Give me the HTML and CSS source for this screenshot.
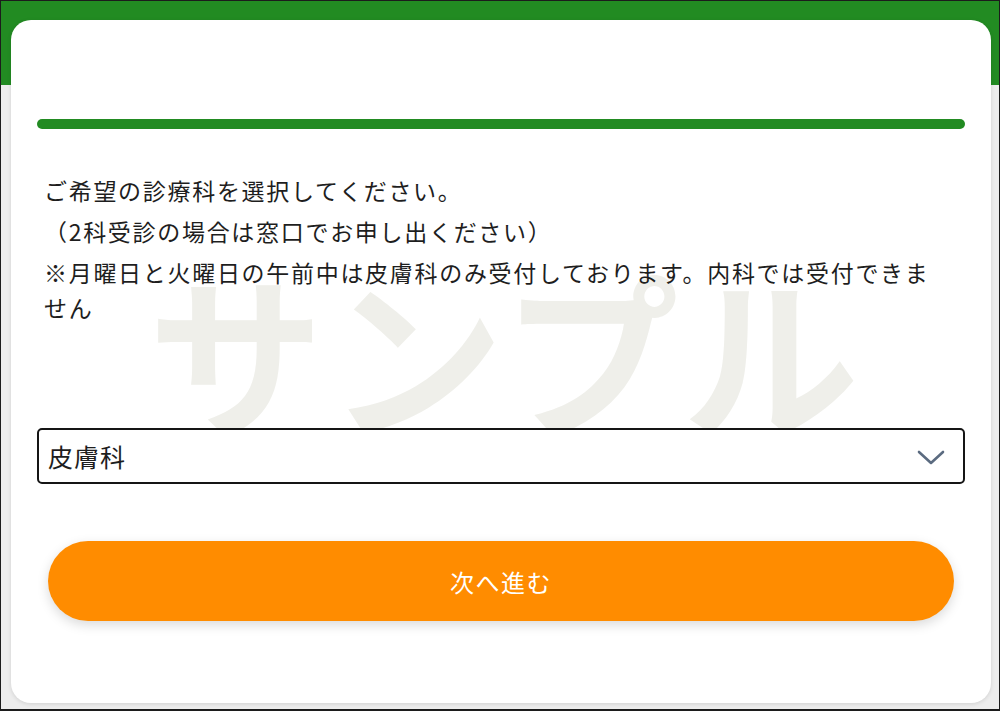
FILE: index.html
```html
<!DOCTYPE html>
<html lang="ja">
<head>
<meta charset="utf-8">
<link rel="stylesheet" href="styles.css">
</head>
<body>
<div class="frame">
  <div class="card">
    <div class="progress"></div>
    <div class="watermark">サンプル</div>
    <div class="message">
      <p class="line">ご希望の診療科を選択してください。</p>
      <p class="line">（2科受診の場合は窓口でお申し出ください）</p>
      <p class="line">※月曜日と火曜日の午前中は皮膚科のみ受付しております。内科では受付できません</p>
    </div>
    <div class="select">
      <span class="select-value">皮膚科</span>
      <svg class="chevron" width="28" height="16" viewBox="0 0 28 16"><path d="M2 2 L14 13 L26 2" fill="none" stroke="#5b6b80" stroke-width="2.6" stroke-linecap="round" stroke-linejoin="round"/></svg>
    </div>
    <div class="button-row">
      <button class="next">次へ進む</button>
    </div>
  </div>
</div>
</body>
</html>
```

FILE: styles.css
```css
* { box-sizing: border-box; }
html, body { margin: 0; padding: 0; }
body {
  width: 1000px;
  height: 711px;
  overflow: hidden;
  font-family: "Noto Sans CJK JP", "Noto Sans", sans-serif;
  color: #1e1e1e;
}
.frame {
  width: 1000px;
  height: 711px;
  border: 1px solid #1c1c1c;
  border-bottom-width: 2px;
  background: linear-gradient(#228b22 0, #228b22 84px, #ededed 84px);
  padding: 19px 8px 0 10px;
}
.card {
  position: relative;
  background: #fff;
  border-radius: 20px;
  height: 683px;
  padding: 99px 26px 0 26px;
  box-shadow: 0 1px 4px rgba(0,0,0,0.12);
}
.progress {
  height: 10px;
  background: #228b22;
  border-radius: 5px;
}
.watermark {
  position: absolute;
  left: 137px;
  top: 242px;
  font-size: 176px;
  font-weight: 700;
  line-height: 1;
  color: #efefea;
  letter-spacing: 4px;
  white-space: nowrap;
  pointer-events: none;
}
.message {
  position: relative;
  margin: 44px 0 0 7px;
  padding-right: 20px;
  display: flex;
  flex-direction: column;
  gap: 6px;
}
.line {
  margin: 0;
  font-size: 23px;
  line-height: 35px;
  letter-spacing: 1.7px;
}
.select {
  position: relative;
  margin-top: 103px;
  height: 56px;
  border: 2px solid #151515;
  border-radius: 5px;
  background: #fff;
  display: flex;
  align-items: center;
  justify-content: space-between;
  padding: 0 18px 0 9px;
}
.select-value {
  font-size: 25px;
  letter-spacing: 1px;
}
.chevron { display: block; margin-top: 4px; }
.button-row {
  padding: 57px 11px 0 11px;
}
.next {
  width: 100%;
  height: 80px;
  border: none;
  border-radius: 40px;
  background: #ff8c00;
  color: #fff;
  font-family: "Noto Sans CJK JP", "Noto Sans", sans-serif;
  font-size: 24px;
  letter-spacing: 1.5px;
  box-shadow: 0 4px 12px rgba(0,0,0,0.15);
}
```
